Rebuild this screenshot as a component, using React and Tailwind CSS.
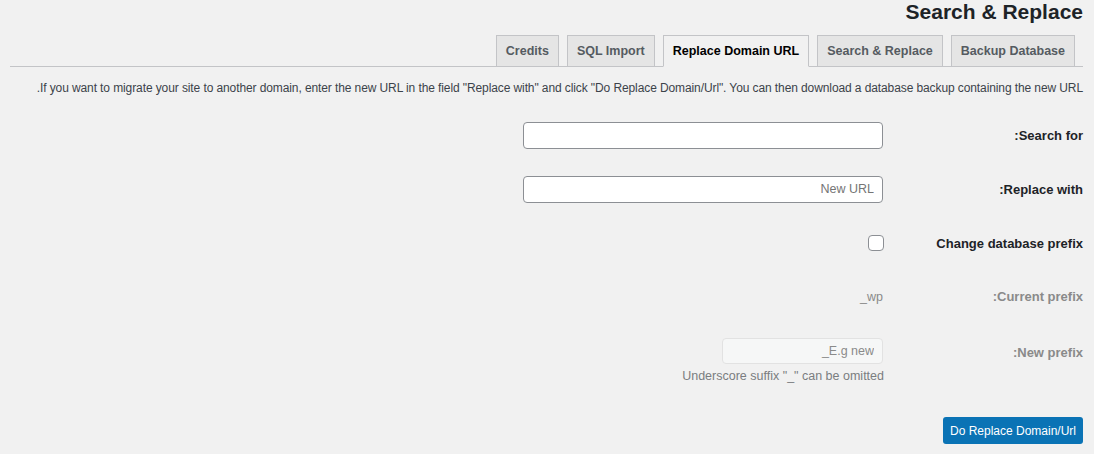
export default function App() {
    const tabs = ["Backup Database", "Search & Replace", "Replace Domain URL", "SQL Import", "Credits"];
    const active = "Replace Domain URL";

    return (
        <div
            dir="rtl"
            className="w-[1094px] h-[454px] overflow-hidden bg-[#f1f1f1] pr-[11px] pl-[10px] text-[#1d2327] text-[13px]"
            style={{ fontFamily: '"Liberation Sans", Arial, sans-serif' }}
        >
            {/* Title */}
            <h1 className="text-[21px] leading-[24px] font-bold text-[#1d2327] pt-0">Search &amp; Replace</h1>

            {/* Tabs */}
            <div className="mt-[11px] flex gap-[8px] pr-[8px] border-b border-[#c3c4c7] h-[32px] items-end">
                {tabs.map((t) => (
                    <div
                        key={t}
                        className={
                            t === active
                                ? "h-[32px] -mb-px px-[9px] flex items-center border border-[#c3c4c7] border-b-[#f1f1f1] bg-[#f1f1f1] text-[12.5px] font-bold text-black"
                                : "h-[31px] px-[9px] flex items-center border border-[#c3c4c7] border-b-0 bg-[#e5e5e5] text-[12.5px] font-bold text-[#555b61]"
                        }
                    >
                        {t}
                    </div>
                ))}
            </div>

            {/* Description */}
            <p className="mt-[12px] leading-[19px] text-[#3c434a] text-[12px] tracking-[-0.1px] whitespace-nowrap">
                If you want to migrate your site to another domain, enter the new URL in the field "Replace with" and click "Do Replace Domain/Url". You can then download a database backup containing the new URL.
            </p>

            {/* Form */}
            <div className="mt-[10px] flex flex-col">
                <div className="flex items-center h-[54px]">
                    <label className="w-[199px] pt-[2px] font-bold text-[#1d2327]">Search for:</label>
                    <input
                        type="text"
                        className="w-[360px] h-[27px] mr-[1px] rounded-[4px] border border-[#8c8f94] bg-white px-2"
                    />
                </div>
                <div className="flex items-center h-[54px]">
                    <label className="w-[199px] pt-[2px] font-bold text-[#1d2327]">Replace with:</label>
                    <input
                        type="text"
                        placeholder="New URL"
                        className="w-[360px] h-[27px] mr-[1px] rounded-[4px] border border-[#8c8f94] bg-white px-2 placeholder:text-[#757575] text-[12.5px]"
                    />
                </div>
                <div className="flex items-center h-[54px]">
                    <label className="w-[199px] pt-[2px] font-bold text-[#1d2327]">Change database prefix</label>
                    <span className="w-4 h-4 rounded-[4px] border border-[#8c8f94] bg-white" />
                </div>
                <div className="flex items-center h-[54px]">
                    <label className="w-[199px] font-bold text-[#8a8a8a]">Current prefix:</label>
                    <span className="mr-[1px] text-[#8a8a8a] text-[12.5px]">wp_</span>
                </div>
                <div className="flex items-start h-[67px]">
                    <label className="w-[199px] pt-[19px] font-bold text-[#8a8a8a]">New prefix:</label>
                    <div className="flex flex-col items-start mt-[14px]">
                        <input
                            type="text"
                            disabled
                            placeholder="E.g new_"
                            className="w-[161px] h-[26px] mr-[1px] rounded-[4px] border border-[#e2e2e2] bg-[#f6f7f7] px-2 placeholder:text-[#8a8a8a] text-[12.5px]"
                        />
                        <p className="mt-[4px] text-[12.5px] leading-[17px] text-[#7a7d80]">Underscore suffix "_" can be omitted</p>
                    </div>
                </div>
            </div>

            {/* Submit */}
            <div className="mt-[26px] flex">
                <button className="h-[27px] w-[140px] rounded-[3px] bg-[#0a73b5] text-white text-[12px] leading-none">
                    Do Replace Domain/Url
                </button>
            </div>
        </div>
    );
}
